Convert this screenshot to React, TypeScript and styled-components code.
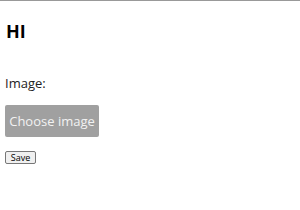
import React from "react";
import styled, { createGlobalStyle } from "styled-components";

const Global = createGlobalStyle`
  html, body { margin: 0; padding: 0; background: #fff; }
  body { font-family: "Open Sans", "Noto Sans", sans-serif; color: #000; }
`;

const Page = styled.div`
  border-top: 1px solid #999;
  padding: 18px 5px 0 5px;
  display: flex;
  flex-direction: column;
  align-items: flex-start;
`;

const Title = styled.h1`
  margin: 0 0 0 1px;
  font-size: 18px;
  font-weight: 700;
  line-height: 24px;
`;

const Label = styled.div`
  margin-top: 31px;
  font-size: 13px;
  line-height: 18px;
  color: #222;
`;

const ChooseButton = styled.div`
  margin-top: 13px;
  width: 94px;
  height: 32px;
  background: #a0a0a0;
  color: #f2f2f2;
  border-radius: 2px;
  font-size: 13px;
  display: flex;
  align-items: center;
  justify-content: center;
`;

const SaveButton = styled.button`
  margin-top: 14px;
  font-family: "Open Sans", sans-serif;
  font-size: 9px;
  line-height: 11px;
  padding: 0 3px;
  height: 13px;
  width: 31px;
  background: #f0f0f0;
  border: 1px solid #777;
  border-radius: 2px;
  color: #000;
`;

export default function App() {
  return (
    <>
      <Global />
      <Page>
        <Title>HI</Title>
        <Label>Image:</Label>
        <ChooseButton>Choose image</ChooseButton>
        <SaveButton>Save</SaveButton>
      </Page>
    </>
  );
}
